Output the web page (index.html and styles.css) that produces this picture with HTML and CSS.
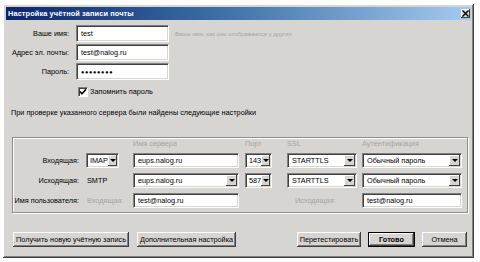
FILE: index.html
```html
<!DOCTYPE html>
<html lang="ru">
<head>
<meta charset="utf-8">
<title>Настройка учётной записи почты</title>
<link rel="stylesheet" href="styles.css">
</head>
<body>
<div class="window">
  <div class="titlebar">
    <span class="title">Настройка учётной записи почты</span>
    <span class="close"><svg width="7" height="7" viewBox="0 0 7 7"><path d="M0.5 0.5 L6.5 6.5 M6.5 0.5 L0.5 6.5" stroke="#000" stroke-width="1.4"/></svg></span>
  </div>
  <div class="content">
    <div class="account">
      <div class="frow">
        <span class="flabel">Ваше имя:</span>
        <span class="field wide">test</span>
        <span class="hint">Ваше имя, как оно отображается у других</span>
      </div>
      <div class="frow">
        <span class="flabel">Адрес эл. почты:</span>
        <span class="field wide">test@nalog.ru</span>
      </div>
      <div class="frow">
        <span class="flabel">Пароль:</span>
        <span class="field wide pass">●●●●●●●●</span>
      </div>
      <div class="remember">
        <span class="check"><svg width="8" height="8" viewBox="0 0 8 8"><path d="M1 3.5 L3 5.8 L7 1.2" fill="none" stroke="#000" stroke-width="1.6"/></svg></span>
        <span>Запомнить пароль</span>
      </div>
    </div>

    <p class="msg">При проверке указанного сервера были найдены следующие настройки</p>

    <div class="group">
      <span class="head c-server">Имя сервера</span>
      <span class="head c-port">Порт</span>
      <span class="head c-ssl">SSL</span>
      <span class="head c-auth">Аутентификация</span>

      <span class="glabel r1">Входящая:</span>
      <span class="combo small c-proto r1"><span class="val">IMAP</span><span class="drop"></span></span>
      <span class="field c-server r1">eups.nalog.ru</span>
      <span class="combo small c-port r1"><span class="val">143</span><span class="drop"></span></span>
      <span class="combo c-ssl r1"><span class="val">STARTTLS</span><span class="drop"></span></span>
      <span class="combo c-auth r1"><span class="val">Обычный пароль</span><span class="drop"></span></span>

      <span class="glabel r2">Исходящая:</span>
      <span class="static c-proto r2">SMTP</span>
      <span class="combo c-server r2"><span class="val">eups.nalog.ru</span><span class="drop"></span></span>
      <span class="combo small c-port r2"><span class="val">587</span><span class="drop"></span></span>
      <span class="combo c-ssl r2"><span class="val">STARTTLS</span><span class="drop"></span></span>
      <span class="combo c-auth r2"><span class="val">Обычный пароль</span><span class="drop"></span></span>

      <span class="glabel r3">Имя пользователя:</span>
      <span class="dim c-proto r3">Входящая:</span>
      <span class="field c-server r3">test@nalog.ru</span>
      <span class="dim c-ssl r3 out">Исходящая:</span>
      <span class="field c-auth r3">test@nalog.ru</span>
    </div>

    <div class="buttons">
      <div class="bgroup">
        <span class="btn b-new">Получить новую учётную запись</span>
        <span class="btn b-adv">Дополнительная настройка</span>
      </div>
      <div class="bgroup right">
        <span class="btn b-retest">Перетестировать</span>
        <span class="btn b-done">Готово</span>
        <span class="btn b-cancel">Отмена</span>
      </div>
    </div>
  </div>
</div>
</body>
</html>
```

FILE: styles.css
```css
html, body {
  margin: 0;
  padding: 0;
  background: #ffffff;
}

body {
  font-family: "Liberation Sans", Arial, sans-serif;
  font-size: 7.3px;
  color: #000;
}

.window {
  margin: 4px 0 0 3px;
  width: 471px;
  height: 254px;
  box-sizing: border-box;
  padding: 3px;
  background: #d7d5d1;
  box-shadow: inset -1px -1px #404040, inset 1px 1px #ffffff,
              inset -2px -2px #808080, inset 2px 2px #d7d5d1;
  display: flex;
  flex-direction: column;
}

.titlebar {
  height: 13px;
  background: linear-gradient(to right, #0a246a 0%, #3a6ea5 45%, #a6caf0 100%);
  display: flex;
  align-items: center;
  justify-content: space-between;
  padding: 0 1px 0 2px;
}

.title {
  color: #fff;
  font-weight: bold;
  font-size: 7.4px;
  letter-spacing: 0.1px;
}

.close {
  width: 9px;
  height: 9px;
  box-sizing: border-box;
  background: #d7d5d1;
  box-shadow: inset -1px -1px #404040, inset 1px 1px #ffffff;
  display: flex;
  align-items: center;
  justify-content: center;
}

.content {
  flex: 1;
  display: flex;
  flex-direction: column;
}

/* top form */
.account {
  margin-top: 5px;
  display: flex;
  flex-direction: column;
  gap: 2px;
}

.frow {
  display: flex;
  align-items: center;
  height: 17px;
}

.flabel {
  width: 63px;
  text-align: right;
  margin-right: 7px;
  white-space: nowrap;
}

.field {
  box-sizing: border-box;
  background: #fff;
  border: 1px solid;
  border-color: #808080 #ffffff #ffffff #808080;
  box-shadow: inset 1px 1px #404040, inset -1px -1px #d7d5d1;
  padding: 0 4px;
  display: flex;
  align-items: center;
  white-space: nowrap;
  overflow: hidden;
}

.field.wide {
  width: 93px;
  height: 17px;
}

.field.pass {
  font-size: 5.5px;
  letter-spacing: 0.7px;
}

.hint {
  margin-left: 6px;
  color: #a4a4a4;
  font-size: 6px;
}

.remember {
  display: flex;
  align-items: center;
  height: 11px;
  margin-top: 4px;
  padding-left: 72px;
}

.check {
  width: 10px;
  height: 10px;
  box-sizing: border-box;
  background: #fff;
  border: 1px solid;
  border-color: #808080 #ffffff #ffffff #808080;
  box-shadow: inset 1px 1px #404040;
  display: flex;
  align-items: center;
  justify-content: center;
  margin-right: 2px;
}

.msg {
  margin: 11px 0 0 5px;
  height: 10px;
  line-height: 10px;
}

/* group box */
.group {
  margin: 19px 0 0 6px;
  width: 456px;
  height: 76px;
  box-sizing: border-box;
  border: 1px solid #8c8c8c;
  box-shadow: inset 1px 1px #ffffff, 1px 1px #ffffff;
  padding: 2px 0 0 0;
  display: grid;
  grid-template-columns: 69px 4px 33px 14px 106px 6px 27px 15px 70px 5px 100px;
  grid-template-rows: 8px 15px 15px 15px;
  row-gap: 5px;
  align-items: center;
}

.head {
  grid-row: 1;
  color: #a4a4a4;
  line-height: 8px;
  white-space: nowrap;
}

.r1 { grid-row: 2; }
.r2 { grid-row: 3; }
.r3 { grid-row: 4; }

.glabel {
  grid-column: 1;
  text-align: right;
  white-space: nowrap;
  padding-right: 3px;
}

.c-proto { grid-column: 3; }
.c-server { grid-column: 5; }
.c-port { grid-column: 7; }
.c-ssl { grid-column: 9; }
.c-auth { grid-column: 11; }

.group .field,
.combo {
  height: 15px;
}

.combo {
  box-sizing: border-box;
  background: #fff;
  border: 1px solid;
  border-color: #808080 #ffffff #ffffff #808080;
  box-shadow: inset 1px 1px #404040, inset -1px -1px #d7d5d1;
  display: flex;
  align-items: stretch;
  padding: 1px;
  min-width: 0;
}

.combo .val {
  flex: 1;
  display: flex;
  align-items: center;
  padding-left: 3px;
  white-space: nowrap;
  overflow: hidden;
}

.combo.small .val {
  padding-left: 2px;
}

.drop {
  width: 11px;
  flex: none;
  background: #d7d5d1;
  box-shadow: inset -1px -1px #404040, inset 1px 1px #ffffff;
  display: flex;
  align-items: center;
  justify-content: center;
}

.combo.small .drop {
  width: 9px;
}

.drop::after {
  content: "";
  border-left: 3px solid transparent;
  border-right: 3px solid transparent;
  border-top: 3px solid #000;
}

.static {
  padding-left: 1px;
}

.dim {
  color: #a4a4a4;
  padding-left: 1px;
  white-space: nowrap;
}

.dim.out {
  padding-left: 8px;
  grid-column: 9;
}

.group .field {
  padding-left: 4px;
}

/* buttons */
.buttons {
  margin-top: 19px;
  display: flex;
  justify-content: space-between;
  padding: 0 4px 0 7px;
}

.bgroup {
  display: flex;
  gap: 8px;
}

.bgroup.right {
  gap: 7px;
}

.btn {
  height: 15px;
  box-sizing: border-box;
  background: #d7d5d1;
  box-shadow: inset -1px -1px #404040, inset 1px 1px #ffffff,
              inset -2px -2px #808080;
  display: flex;
  align-items: center;
  justify-content: center;
  white-space: nowrap;
}

.b-new { width: 116px; }
.b-adv { width: 99px; }
.b-retest { width: 64px; }
.b-done {
  width: 47px;
  font-weight: bold;
  border: 1px solid #000;
}
.b-cancel { width: 45px; }
```
